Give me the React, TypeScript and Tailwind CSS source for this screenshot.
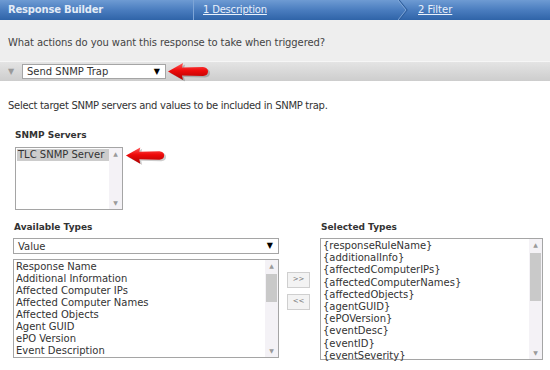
import React from 'react';

const availableTypes = [
  'Response Name',
  'Additional Information',
  'Affected Computer IPs',
  'Affected Computer Names',
  'Affected Objects',
  'Agent GUID',
  'ePO Version',
  'Event Description',
];

const selectedTypes = [
  '{responseRuleName}',
  '{additionalInfo}',
  '{affectedComputerIPs}',
  '{affectedComputerNames}',
  '{affectedObjects}',
  '{agentGUID}',
  '{ePOVersion}',
  '{eventDesc}',
  '{eventID}',
  '{eventSeverity}',
];

const RedArrow: React.FC<{ width?: number }> = ({ width = 44 }) => (
  <svg width={width} height={20} viewBox="0 0 44 20">
    <defs>
      <linearGradient id="arrowFill" x1="0" y1="0" x2="0" y2="1">
        <stop offset="0" stopColor="#ff5a5a" />
        <stop offset="0.45" stopColor="#ee0a0a" />
        <stop offset="1" stopColor="#b00000" />
      </linearGradient>
    </defs>
    <path
      d="M2 10 L17 1.5 L16 6 L37 5.5 Q42 6 42 10 Q42 14 37 14.5 L16 14 L17 18.5 Z"
      fill="#000"
      opacity="0.2"
      transform="translate(1 1)"
    />
    <path
      d="M1 9.5 L16 1 L15 5.5 L36 5 Q41 5.5 41 9.5 Q41 13.5 36 14 L15 13.5 L16 18 Z"
      fill="url(#arrowFill)"
    />
  </svg>
);

const Scrollbar: React.FC<{ thumbTop?: number; thumbHeight?: number }> = ({ thumbTop, thumbHeight }) => (
  <div className="relative w-[13px] shrink-0 bg-[#f4f2f6] flex flex-col justify-between items-center py-[3px]">
    <span className="text-[6px] leading-none text-[#9a9a9a]">▲</span>
    {thumbHeight ? (
      <div
        className="absolute left-[1px] right-[1px] bg-[#c9c9c9]"
        style={{ top: thumbTop, height: thumbHeight }}
      />
    ) : null}
    <span className="text-[6px] leading-none text-[#9a9a9a]">▼</span>
  </div>
);

const Select: React.FC<{ value: string; className?: string }> = ({ value, className }) => (
  <div className={`flex items-center justify-between bg-white border border-[#a5a5a5] pl-[4px] pr-[5px] ${className ?? ''}`}>
    <span className="text-[10px] text-[#333]">{value}</span>
    <span className="text-[8px] text-black">▼</span>
  </div>
);

const App: React.FC = () => {
  return (
    <div
      className="w-[550px] h-[370px] overflow-hidden bg-white text-[#333]"
      style={{ fontFamily: '"DejaVu Sans", Verdana, sans-serif' }}
    >
      {/* wizard header */}
      <div className="relative flex h-[20px] bg-gradient-to-b from-[#6e9bd3] via-[#4a7dbf] to-[#2f64a8] text-[10px] leading-[20px]">
        <div className="w-[193px] pl-[8px] font-bold text-[#e3ebf6] tracking-[-0.2px]">Response Builder</div>
        <div className="w-[1px] bg-[#2d5d9c] border-r border-[#7ea5d6]" />
        <div className="w-[204px] pl-[9px]">
          <span className="underline text-[#e9f0fa] tracking-[-0.2px]">1 Description</span>
        </div>
        <svg width="12" height="20" viewBox="0 0 12 20" className="shrink-0">
          <path d="M1 0 L9 10 L1 20" fill="none" stroke="#2d5d9c" strokeWidth="1.2" />
          <path d="M0 0 L8 10 L0 20" fill="none" stroke="#8fb2de" strokeWidth="0.8" />
        </svg>
        <div className="pl-[8px]">
          <span className="underline text-[#e9f0fa]">2 Filter</span>
        </div>
      </div>

      {/* question */}
      <div className="h-[41px] bg-[#eeeeee] pl-[8px] pt-[15px] text-[10px] text-[#444] tracking-[-0.1px]">
        What actions do you want this response to take when triggered?
      </div>

      {/* action bar */}
      <div className="flex items-center h-[20px] bg-gradient-to-b from-[#e4e4e4] to-[#cdcdcd] border-t border-[#f6f6f6]">
        <div className="w-[22px] text-center text-[8px] text-[#9a9a9a]">▼</div>
        <Select value="Send SNMP Trap" className="w-[144px] h-[15px]" />
        <div className="ml-[1px] mt-[1px]">
          <RedArrow />
        </div>
      </div>

      {/* body */}
      <div className="px-[8px] pt-[17px] text-[10px] text-[#333] tracking-[-0.3px]">
        Select target SNMP servers and values to be included in SNMP trap.
      </div>

      <div className="pl-[15px] pt-[16px]">
        <div className="text-[9px] font-bold text-[#333]">SNMP Servers</div>
        <div className="flex items-start mt-[4px]">
          <div className="flex w-[108px] h-[63px] border border-[#a5a5a5] bg-white">
            <div className="flex-1 pt-[1px] pl-[1px]">
              <div className="bg-[#cccccc] text-[10px] leading-[12px] pl-[1px] text-[#333]">TLC SNMP Server</div>
            </div>
            <Scrollbar />
          </div>
          <div className="-mt-[1px] ml-[2px]">
            <RedArrow width={42} />
          </div>
        </div>
      </div>

      <div className="flex pl-[13px] pt-[11px]">
        <div className="w-[266px]">
          <div className="text-[9px] font-bold text-[#333] pl-[1px]">Available Types</div>
          <Select value="Value" className="mt-[4px] h-[16px]" />
          <div className="flex mt-[5px] h-[99px] border border-[#a5a5a5] bg-white">
            <div className="flex-1 pl-[2px] pt-[1px] text-[10px] leading-[12px] text-[#333]">
              {availableTypes.map((t) => (
                <div key={t}>{t}</div>
              ))}
            </div>
            <Scrollbar thumbTop={14} thumbHeight={28} />
          </div>
        </div>

        <div className="flex flex-col gap-[6px] pt-[51px] pl-[8px] pr-[10px]">
          <button className="w-[23px] h-[16px] bg-[#f3f3f3] border border-[#cfcfcf] text-[7px] text-[#777] leading-none">&gt;&gt;</button>
          <button className="w-[23px] h-[16px] bg-[#f3f3f3] border border-[#cfcfcf] text-[7px] text-[#777] leading-none">&lt;&lt;</button>
        </div>

        <div className="w-[223px]">
          <div className="text-[9px] font-bold text-[#333] pl-[1px]">Selected Types</div>
          <div className="flex mt-[4px] h-[122px] border border-[#a5a5a5] bg-white">
            <div className="flex-1 pl-[2px] pt-[1px] text-[10px] leading-[12.2px] text-[#333]">
              {selectedTypes.map((t) => (
                <div key={t}>{t}</div>
              ))}
            </div>
            <Scrollbar thumbTop={14} thumbHeight={48} />
          </div>
        </div>
      </div>
    </div>
  );
};

export default App;
